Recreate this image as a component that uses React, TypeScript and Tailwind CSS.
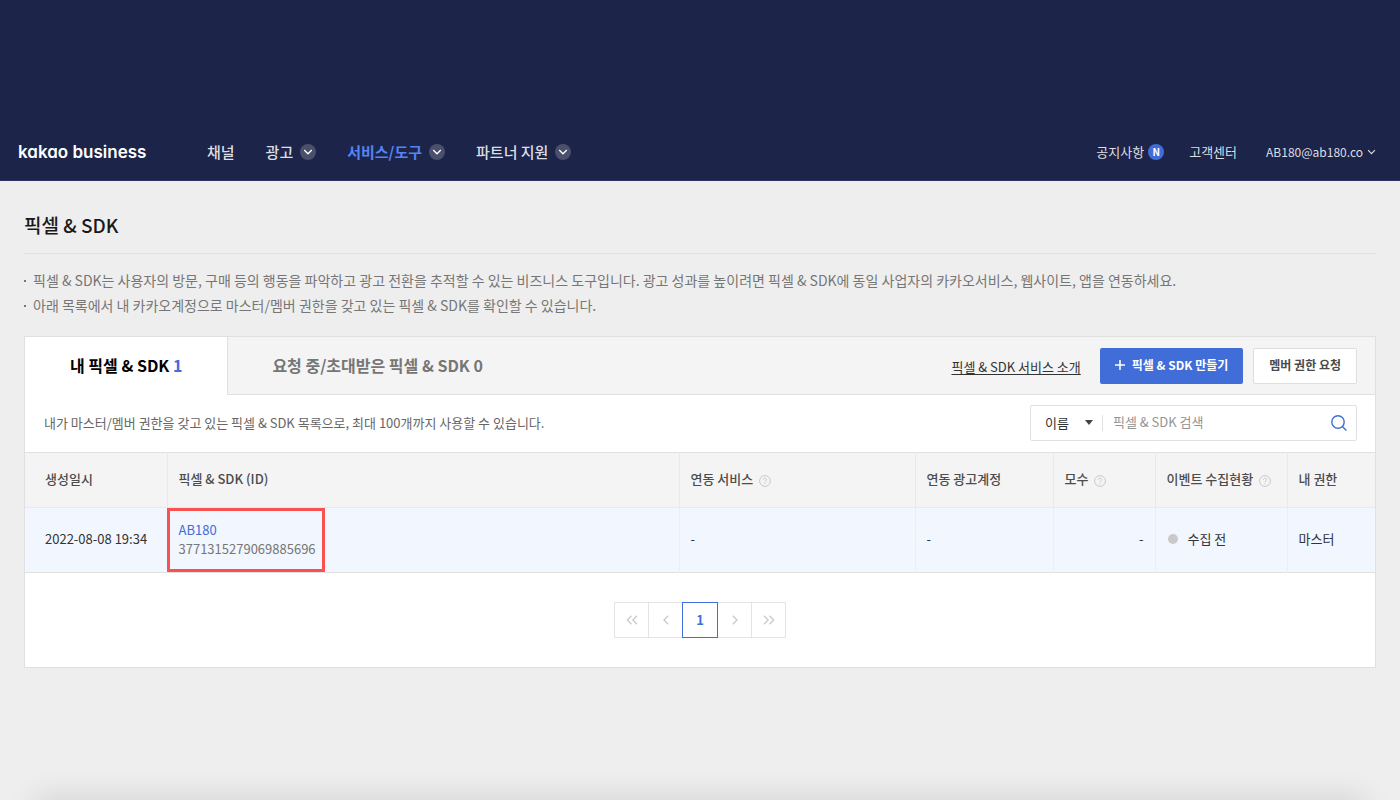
import type { ReactNode } from 'react';

function ChevronDown({ className }: { className: string }) {
  return (
    <svg viewBox="0 0 10 6" fill="none" stroke="currentColor" strokeWidth="1.3" className={className} aria-hidden="true">
      <path d="M1.2 1 5 4.8 8.8 1" />
    </svg>
  );
}

function NavItem({ label, active, menu }: { label: string; active?: boolean; menu?: boolean }) {
  return (
    <a href="#" className={active ? 'flex items-center gap-[7px] font-bold text-[#5485f5]' : 'flex items-center gap-[7px] text-[#dddee3]'}>
      {label}
      {menu && (
        <span className="flex size-4 items-center justify-center rounded-full bg-[#4a4f6c] text-white">
          <ChevronDown className="h-[6px] w-[10px]" />
        </span>
      )}
    </a>
  );
}

function HelpIcon() {
  return (
    <svg viewBox="0 0 12 12" fill="none" stroke="#c9c9c9" className="mt-[3px] size-3 shrink-0" role="img" aria-label="도움말">
      <circle cx="6" cy="6" r="5.4" />
      <path d="M4.4 4.8c0-1 .7-1.6 1.6-1.6s1.6.6 1.6 1.4c0 1.1-1.6 1.1-1.6 2.3M6 7.9v1.1" />
    </svg>
  );
}

function HeadCell({ children, help }: { children: ReactNode; help?: boolean }) {
  return (
    <th scope="col" className="border-l border-[#e9e9e9] px-[11px] pb-[2px] font-medium first:border-l-0 first:pl-5">
      <span className="flex items-center gap-[6px] whitespace-nowrap">
        {children}
        {help && <HelpIcon />}
      </span>
    </th>
  );
}

const pageButton = 'flex h-9 w-[35px] items-center justify-center border border-[#e4e4e4] text-[#c9c9c9]';

function PageArrow({ label, path }: { label: string; path: string }) {
  return (
    <button type="button" aria-label={label} className={pageButton}>
      <svg viewBox="0 0 12 10" fill="none" stroke="currentColor" strokeWidth="1.3" className="h-[10px] w-3" aria-hidden="true">
        <path d={path} />
      </svg>
    </button>
  );
}

export default function App() {
  return (
    <div className="flex min-h-screen flex-col bg-[#eeeeee] font-['Noto_Sans_CJK_KR',sans-serif] text-[13px] leading-5 text-[#333333]">
      <header className="flex items-center justify-between border-b border-[#2b3560] bg-[#1c2449] pt-[124px] pr-6 pl-[18px]">
        <div className="flex h-14 items-center">
          <a href="#" className="w-[189px] font-['Inter',sans-serif] text-[17px] font-semibold text-white [font-feature-settings:'cv11']">
            kakao business
          </a>
          <nav className="flex items-center gap-[31px] text-[15px] font-medium">
            <NavItem label="채널" />
            <NavItem label="광고" menu />
            <NavItem label="서비스/도구" active menu />
            <NavItem label="파트너 지원" menu />
          </nav>
        </div>
        <div className="flex items-center text-[13px] text-[#dddee3]">
          <a href="#" className="flex items-center gap-1">
            공지사항
            <span className="flex size-4 items-center justify-center rounded-full bg-[#416dd9] text-[10px] font-bold text-white">N</span>
          </a>
          <a href="#" className="ml-[25px]">고객센터</a>
          <button type="button" className="ml-[29px] flex items-center gap-1 text-xs">
            AB180@ab180.co
            <ChevronDown className="h-[6px] w-[9px]" />
          </button>
        </div>
      </header>

      <main className="flex-1 px-6 pt-7">
        <h1 className="border-b border-[#e2e2e2] pb-3 text-[19px] leading-8 font-medium text-[#191919]">픽셀 &amp; SDK</h1>
        <ul className="mt-[14px] text-sm leading-[25px] text-[#767676]">
          <li className="flex items-center gap-[7px]">
            <span className="size-[2px] bg-[#767676]" />
            픽셀 &amp; SDK는 사용자의 방문, 구매 등의 행동을 파악하고 광고 전환을 추적할 수 있는 비즈니스 도구입니다. 광고 성과를 높이려면 픽셀 &amp; SDK에 동일 사업자의 카카오서비스, 웹사이트, 앱을 연동하세요.
          </li>
          <li className="flex items-center gap-[7px]">
            <span className="size-[2px] bg-[#767676]" />
            아래 목록에서 내 카카오계정으로 마스터/멤버 권한을 갖고 있는 픽셀 &amp; SDK를 확인할 수 있습니다.
          </li>
        </ul>

        <section className="mt-[18px] border border-[#e0e0e0] bg-white">
          <div className="flex h-[58px] bg-[#f4f4f4]">
            <div role="tablist" className="flex text-base font-bold">
              <button type="button" role="tab" aria-selected="true" className="border-r border-[#e0e0e0] bg-white px-[45px] pb-[2px] text-black">
                내 픽셀 &amp; SDK <span className="text-[#416dd9]">1</span>
              </button>
              <button type="button" role="tab" aria-selected="false" className="border-b border-[#e0e0e0] px-11 pb-px text-[#767676]">
                요청 중/초대받은 픽셀 &amp; SDK 0
              </button>
            </div>
            <div className="flex flex-1 items-center justify-end border-b border-[#e0e0e0] pr-[18px]">
              <a href="#" className="mr-[19px] pt-[2px] underline underline-offset-2">픽셀 &amp; SDK 서비스 소개</a>
              <button type="button" className="mr-[10px] flex h-9 items-center gap-[7px] rounded-xs bg-[#416dd9] px-[15px] pb-[2px] text-xs font-bold text-white">
                <svg viewBox="0 0 10 10" stroke="currentColor" strokeWidth="1.5" className="size-[10px]" aria-hidden="true">
                  <path d="M5 0v10M0 5h10" />
                </svg>
                픽셀 &amp; SDK 만들기
              </button>
              <button type="button" className="h-9 rounded-xs border border-[#dedede] bg-white px-[15px] pb-[2px] text-xs font-bold text-[#4a4a4a]">
                멤버 권한 요청
              </button>
            </div>
          </div>

          <div className="flex h-[57px] items-center justify-between pr-[18px] pb-[2px] pl-[19px]">
            <p className="text-[#666666]">내가 마스터/멤버 권한을 갖고 있는 픽셀 &amp; SDK 목록으로, 최대 100개까지 사용할 수 있습니다.</p>
            <form className="flex h-9 w-[327px] items-center rounded-xs border border-[#e0e0e0] pr-[9px]">
              <span className="relative flex w-[72px] items-center border-r border-[#e0e0e0]">
                <select aria-label="검색 조건" className="h-4 w-full appearance-none pl-[14px] leading-4 outline-none">
                  <option>이름</option>
                </select>
                <svg viewBox="0 0 8 5" fill="#444444" className="pointer-events-none absolute right-[9px] h-[5px] w-2" aria-hidden="true">
                  <path d="M0 0h8L4 5z" />
                </svg>
              </span>
              <input type="text" aria-label="픽셀 & SDK 검색" placeholder="픽셀 & SDK 검색" className="min-w-0 flex-1 px-[10px] pb-[2px] outline-none placeholder:text-[#949494]" />
              <button type="button" aria-label="검색">
                <svg viewBox="0 0 16 16" fill="none" stroke="#416dd9" strokeWidth="1.4" className="size-4" aria-hidden="true">
                  <circle cx="7" cy="7" r="6.2" />
                  <path d="m11.4 11.4 4 4" />
                </svg>
              </button>
            </form>
          </div>

          <table className="w-full table-fixed border-collapse border-y border-[#e0e0e0] text-left">
            <colgroup>
              <col className="w-[142px]" />
              <col />
              <col className="w-[236px]" />
              <col className="w-[138px]" />
              <col className="w-[102px]" />
              <col className="w-[132px]" />
              <col className="w-[88px]" />
            </colgroup>
            <thead className="bg-[#f4f4f4] text-[#4c4c4c]">
              <tr className="h-[55px] border-b border-[#e9e9e9]">
                <HeadCell>생성일시</HeadCell>
                <HeadCell>픽셀 &amp; SDK (ID)</HeadCell>
                <HeadCell help>연동 서비스</HeadCell>
                <HeadCell>연동 광고계정</HeadCell>
                <HeadCell help>모수</HeadCell>
                <HeadCell help>이벤트 수집현황</HeadCell>
                <HeadCell>내 권한</HeadCell>
              </tr>
            </thead>
            <tbody className="bg-[#f1f6ff]">
              <tr className="h-[65px]">
                <td className="pb-[2px] pl-5">2022-08-08 19:34</td>
                <td className="relative border-l border-[#eeeeee] px-[11px] pb-[2px] leading-[19px]">
                  <a href="#" className="block text-[#416dd9]">AB180</a>
                  <span className="text-[#767676]">3771315279069885696</span>
                  <span className="absolute inset-y-0 -left-px w-[158px] border-3 border-[#f95151]" />
                </td>
                <td className="border-l border-[#eeeeee] px-[11px] pb-[2px]">-</td>
                <td className="border-l border-[#eeeeee] px-[11px] pb-[2px]">-</td>
                <td className="border-l border-[#eeeeee] px-[11px] pb-[2px] text-right">-</td>
                <td className="border-l border-[#eeeeee] px-3 pb-[2px]">
                  <span className="flex items-center gap-[10px]">
                    <span className="size-[10px] rounded-full bg-[#c9c9c9]" />
                    수집 전
                  </span>
                </td>
                <td className="border-l border-[#eeeeee] px-[11px] pb-[2px]">마스터</td>
              </tr>
            </tbody>
          </table>

          <nav aria-label="페이지" className="flex justify-center -space-x-px pt-[29px] pb-[29px]">
            <PageArrow label="첫 페이지" path="M5.5.8 1.3 5l4.2 4.2M11 .8 6.8 5 11 9.2" />
            <PageArrow label="이전 페이지" path="M8.2.8 4 5l4.2 4.2" />
            <button type="button" aria-current="page" className="z-10 flex h-9 w-9 items-center justify-center border border-[#416dd9] text-[13px] font-bold text-[#416dd9]">
              1
            </button>
            <PageArrow label="다음 페이지" path="M3.8.8 8 5 3.8 9.2" />
            <PageArrow label="마지막 페이지" path="M1 .8 5.2 5 1 9.2M6.5.8 10.7 5 6.5 9.2" />
          </nav>
        </section>
      </main>

      <footer className="h-8 overflow-hidden px-10 pt-8">
        <div className="h-5 shadow-[0_4px_32px_4px_rgba(0,0,0,0.14)]" />
      </footer>
    </div>
  );
}
